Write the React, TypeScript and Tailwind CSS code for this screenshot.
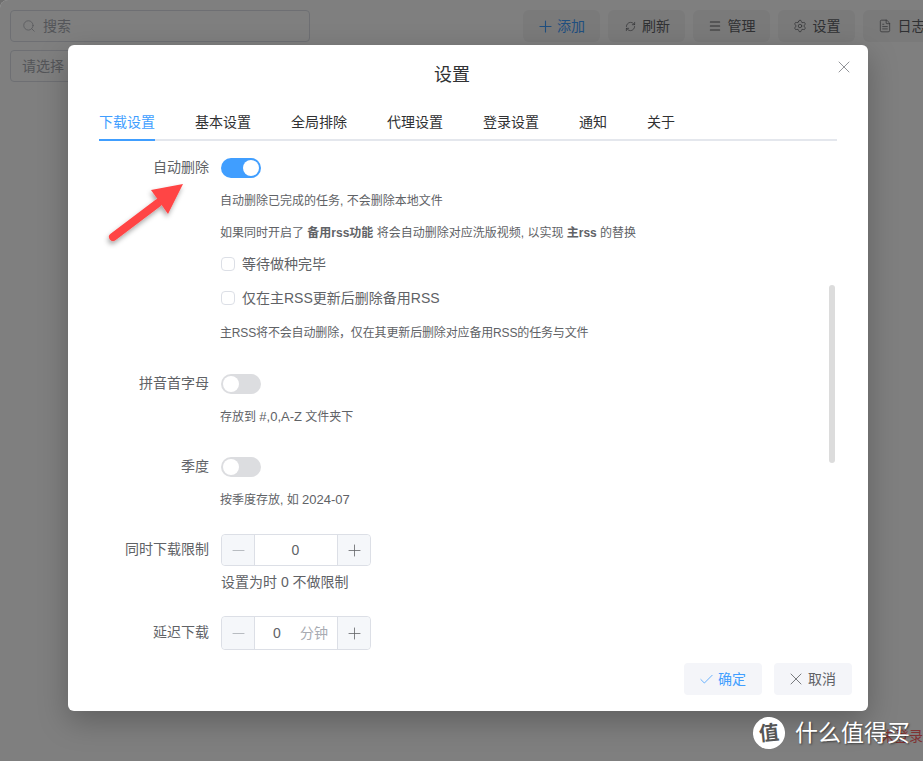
import type { ReactNode } from 'react';
import { Check, FileText, Menu, Minus, Plus, RefreshCw, Search, Settings, X } from 'lucide-react';

const tabs = ['下载设置', '基本设置', '全局排除', '代理设置', '登录设置', '通知', '关于'];

function TopButton({ icon, label, blue, className }: { icon: ReactNode; label: string; blue?: boolean; className?: string }) {
  return (
    <div className={`flex h-8 w-[77px] shrink-0 items-center justify-center gap-1.5 rounded-md bg-[#f4f4f5] text-sm ${blue ? 'text-[#409eff]' : 'text-[#606266]'} ${className ?? ''}`}>
      {icon}
      <span>{label}</span>
    </div>
  );
}

function Toggle({ on }: { on?: boolean }) {
  return (
    <div className={`flex h-5 w-10 items-center rounded-full p-0.5 ${on ? 'justify-end bg-[#409eff]' : 'justify-start bg-[#dcdde0]'}`}>
      <div className="h-4 w-4 rounded-full bg-white" />
    </div>
  );
}

function Row({ label, children, className }: { label: string; children: ReactNode; className?: string }) {
  return (
    <div className={`flex items-center gap-3 ${className ?? ''}`}>
      <div className="-mt-0.5 w-[110px] text-right text-sm leading-5 text-[#606266]">{label}</div>
      {children}
    </div>
  );
}

function Help({ children, className }: { children: ReactNode; className?: string }) {
  return <div className={`ml-[121px] text-xs leading-5 text-[#606266] ${className ?? ''}`}>{children}</div>;
}

function CheckRow({ label, className }: { label: string; className?: string }) {
  return (
    <div className={`ml-[122px] flex h-5 items-center gap-[7px] text-sm text-[#606266] ${className ?? ''}`}>
      <div className="h-[14px] w-[14px] rounded-sm border border-[#dcdfe6] bg-white" />
      <span>{label}</span>
    </div>
  );
}

function NumberBox({ unit, className }: { unit?: string; className?: string }) {
  return (
    <div className={`flex w-[150px] items-stretch rounded border border-[#dcdfe6] text-sm text-[#606266] ${className ?? ''}`}>
      <div className="flex w-[33px] items-center justify-center rounded-l border-r border-[#dcdfe6] bg-[#f5f7fa] text-[#a8abb2]">
        <Minus size={19} strokeWidth={1} />
      </div>
      <div className="flex flex-1 items-center justify-center">
        {unit ? (
          <div className="flex w-full items-center justify-between pl-[18px] pr-[9px]">
            <span>0</span>
            <span className="text-[#a8abb2]">{unit}</span>
          </div>
        ) : (
          <span className="-ml-px">0</span>
        )}
      </div>
      <div className="flex w-[33px] items-center justify-center rounded-r border-l border-[#dcdfe6] bg-[#f5f7fa]">
        <Plus size={19} strokeWidth={1} />
      </div>
    </div>
  );
}

export default function App() {
  return (
    <div className="h-[761px] w-[923px] bg-[#6e6e6e]">
      <div className="relative h-[761px] w-[923px] overflow-hidden rounded-tl-lg bg-white font-['Liberation_Sans','Noto_Sans_CJK_SC',sans-serif]">
        {/* page behind the dialog */}
        <div className="flex items-start justify-between p-2.5 pr-0">
          <div className="flex h-8 w-[300px] items-center gap-[7px] rounded border border-[#dcdfe6] px-[11px] text-sm text-[#a8abb2]">
            <Search size={14} strokeWidth={1.25} />
            <span>搜索</span>
          </div>
          <div className="flex w-[400px] gap-2 overflow-hidden">
            <TopButton blue className="pr-0.5" icon={<Plus size={19} strokeWidth={1.4} className="-mr-1" />} label="添加" />
            <TopButton className="pl-0.5" icon={<RefreshCw size={11} strokeWidth={1.5} />} label="刷新" />
            <TopButton icon={<Menu size={14} strokeWidth={1.75} />} label="管理" />
            <TopButton icon={<Settings size={14} strokeWidth={1.25} />} label="设置" />
            <TopButton icon={<FileText size={14} strokeWidth={1.25} />} label="日志" />
          </div>
        </div>
        <div className="ml-2.5 -mt-0.5 flex h-8 w-[100px] items-center rounded border border-[#dcdfe6] px-[11px] text-sm text-[#a8abb2]">请选择</div>
        <div className="absolute bottom-[15px] right-0 text-sm text-[#ff6666]">未登录</div>

        <div className="absolute inset-0 bg-black/50" />

        {/* dialog */}
        <div className="absolute left-[68px] top-[45px] flex h-[666px] w-[800px] flex-col rounded-md bg-white shadow-[0_10px_30px_rgba(0,0,0,0.25)]">
          <div className="relative pr-8 pt-[18px] text-center text-lg leading-6 text-[#303133]">
            设置
            <X size={20} strokeWidth={1} className="absolute right-3.5 top-3 text-[#7d7f85]" />
          </div>
          <div className="mx-[31px] mt-[25px] flex h-[29px] gap-10 border-b-2 border-[#e4e7ed] text-sm leading-5 text-[#303133]">
            {tabs.map((t, i) => (
              <div key={t} className={`h-[29px] w-fit ${i === 0 ? 'border-b-2 border-[#409eff] text-[#409eff]' : ''}`}>{t}</div>
            ))}
          </div>

          <div className="relative flex-1 overflow-hidden pl-[31px] pt-[17px]">
            <Row label="自动删除"><Toggle on /></Row>
            <Help className="mt-[13px]">自动删除已完成的任务, 不会删除本地文件</Help>
            <Help className="mt-3">如果同时开启了 <b className="font-bold">备用rss功能</b> 将会自动删除对应洗版视频, 以实现 <b className="font-bold">主rss</b> 的替换</Help>
            <CheckRow label="等待做种完毕" className="mt-[11px]" />
            <CheckRow label="仅在主RSS更新后删除备用RSS" className="mt-[14px]" />
            <Help className="mt-[15px] tracking-[-0.15px]">主RSS将不会自动删除，仅在其更新后删除对应备用RSS的任务与文件</Help>

            <Row label="拼音首字母" className="mt-[31px]"><Toggle /></Row>
            <Help className="mt-[13px]">存放到 <span className="text-[13px]">#,0,A-Z</span> 文件夹下</Help>

            <Row label="季度" className="mt-[30px]"><Toggle /></Row>
            <Help className="mt-[13px]">按季度存放, 如 <span className="text-[13px]">2024-07</span></Help>

            <Row label="同时下载限制" className="mt-6"><NumberBox className="h-8" /></Row>
            <div className="ml-[122px] mt-1.5 text-sm leading-5 text-[#606266]">设置为时 0 不做限制</div>

            <Row label="延迟下载" className="mt-6"><NumberBox unit="分钟" className="h-[34px]" /></Row>

            <div className="absolute right-[33px] top-[144px] h-[178px] w-1.5 rounded-full bg-[#dcdcdc]" />
          </div>

          <div className="flex justify-end gap-3 pb-4 pr-4">
            <div className="flex h-8 w-[78px] items-center justify-center gap-[3px] rounded bg-[#f4f5f9] pr-0.5 text-sm text-[#409eff]">
              <Check size={17} strokeWidth={1.1} />
              确定
            </div>
            <div className="flex h-8 w-[78px] items-center justify-center gap-0.5 rounded bg-[#f4f5f9] pr-1 text-sm text-[#606266]">
              <X size={20} strokeWidth={1} />
              取消
            </div>
          </div>
        </div>

        {/* annotation arrow */}
        <svg className="absolute left-[100px] top-[175px]" width="100" height="80" viewBox="0 0 100 80">
          <defs>
            <filter id="s" x="-30%" y="-30%" width="160%" height="160%">
              <feDropShadow dx="-1" dy="3" stdDeviation="2.5" floodColor="#000" floodOpacity="0.35" />
            </filter>
          </defs>
          <g filter="url(#s)">
            <path d="M13 62 L58 28" stroke="#ff4444" strokeWidth="8" strokeLinecap="round" fill="none" />
            <path d="M83 9 L51 15 L68 39 Z" fill="#ff4444" />
          </g>
        </svg>

        {/* watermark */}
        <div className="absolute left-[753px] top-[717px] flex items-center gap-[10px]">
          <div className="flex h-8 w-8 -rotate-6 items-center justify-center rounded-full bg-white text-xl font-bold leading-none text-[#555]">值</div>
          <div className="text-[23px] leading-8 text-white [text-shadow:1px_1px_2px_rgba(0,0,0,0.5)]">什么值得买</div>
        </div>
      </div>
    </div>
  );
}
